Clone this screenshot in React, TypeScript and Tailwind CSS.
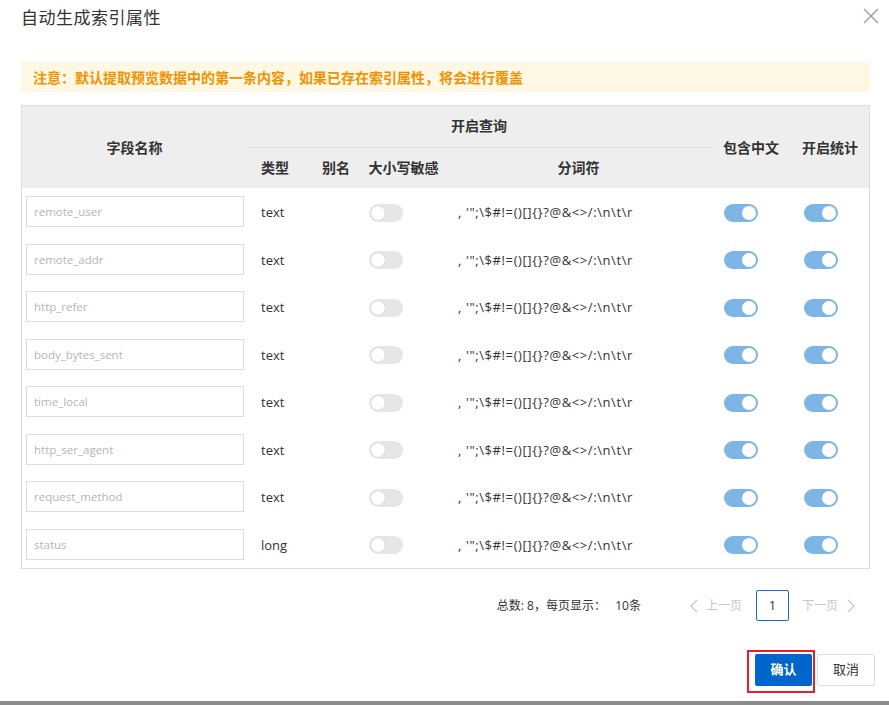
import React from 'react'

const font = { fontFamily: '"Open Sans", "Noto Sans CJK SC", sans-serif' }

const SEP = `, '";\\$#!=()[]{}?@&<>/:\\n\\t\\r`

const rows = [
	{ name: 'remote_user', type: 'text' },
	{ name: 'remote_addr', type: 'text' },
	{ name: 'http_refer', type: 'text' },
	{ name: 'body_bytes_sent', type: 'text' },
	{ name: 'time_local', type: 'text' },
	{ name: 'http_ser_agent', type: 'text' },
	{ name: 'request_method', type: 'text' },
	{ name: 'status', type: 'long' },
]

function Toggle({ on }: { on?: boolean }) {
	return (
		<div
			className={`relative w-[34px] h-[18px] rounded-full ${
				on ? 'bg-[#7db5e5]' : 'bg-[#e6e6e6]'
			}`}
		>
			<div
				className={`absolute top-[2px] w-[14px] h-[14px] rounded-full bg-white ${
					on ? 'right-[2px]' : 'left-[2px] shadow-[0_0_1px_rgba(0,0,0,0.25)]'
				}`}
			/>
		</div>
	)
}

export default function App() {
	return (
		<div className="w-[889px] h-[705px] bg-white flex flex-col text-[#333]" style={font}>
			<div className="flex items-center justify-between h-[36px] pl-[21px] pr-[9px]">
				<h1 className="text-[17px] leading-[24px] text-[#333] tracking-[0.5px]">自动生成索引属性</h1>
				<svg width="18" height="18" viewBox="0 0 18 18" className="-mt-[5px]">
					<path d="M2 2 L16 16 M16 2 L2 16" stroke="#9a9a9a" strokeWidth="1.3" />
				</svg>
			</div>

			<div className="mt-[26px] ml-[21px] mr-[19px] h-[30px] bg-[#fdf7e3] flex items-center pl-[12px] text-[14px] font-bold text-[#f39200]">
				注意：默认提取预览数据中的第一条内容，如果已存在索引属性，将会进行覆盖
			</div>

			<div className="mt-[13px] ml-[21px] mr-[19px] border border-[#dddddd]">
				<table className="w-full border-collapse text-[13px] table-fixed">
					<colgroup>
						<col className="w-[225px]" />
						<col className="w-[64px]" />
						<col className="w-[50px]" />
						<col className="w-[85px]" />
						<col className="w-[265px]" />
						<col className="w-[80px]" />
						<col />
					</colgroup>
					<thead className="bg-[#eeeeee] font-bold text-[#333] text-[14px]">
						<tr className="h-[41px]">
							<th rowSpan={2} className="font-bold">字段名称</th>
							<th colSpan={4} className="font-bold border-b border-[#dddddd] pb-[2px]">
								开启查询
							</th>
							<th rowSpan={2} className="font-bold">包含中文</th>
							<th rowSpan={2} className="font-bold">开启统计</th>
						</tr>
						<tr className="h-[41px]">
							<th className="font-bold pr-[8px]">类型</th>
							<th className="font-bold">别名</th>
							<th className="font-bold">大小写敏感</th>
							<th className="font-bold">分词符</th>
						</tr>
					</thead>
					<tbody>
						{rows.map((r) => (
							<tr key={r.name} className="h-[47.5px]">
								<td className="pl-[4px] pr-[3px]">
									<div className="h-[31px] border border-[#dddddd] flex items-center pl-[7px] text-[11.5px] text-[#b5b5b5]">
										{r.name}
									</div>
								</td>
								<td className="pl-[14px] pt-[2px]">{r.type}</td>
								<td />
								<td className="pl-[8px] pt-[2px]">
									<Toggle />
								</td>
								<td className="pl-[12px] pt-[2px] whitespace-nowrap tracking-[0.6px]">{SEP}</td>
								<td className="pl-[13px] pt-[2px]">
									<Toggle on />
								</td>
								<td className="pl-[13px] pt-[2px]">
									<Toggle on />
								</td>
							</tr>
						))}
					</tbody>
				</table>
			</div>

			<div className="mt-[21px] flex items-center justify-end pr-[33px] text-[12px]">
				<span className="text-[#333]">总数: 8，每页显示：&nbsp;&nbsp;&nbsp;10条</span>
				<span className="ml-[48px] flex items-center gap-[7px] text-[#c8c8c8]">
					<svg width="10" height="14" viewBox="0 0 10 14">
						<path d="M8 1 L2 7 L8 13" fill="none" stroke="#c8c8c8" strokeWidth="1.3" />
					</svg>
					上一页
				</span>
				<span className="ml-[14px] w-[33px] h-[31px] border border-[#1a6fcb] rounded-[2px] flex items-center justify-center text-[13px] text-[#333]">
					1
				</span>
				<span className="ml-[13px] flex items-center gap-[8px] text-[#c8c8c8]">
					下一页
					<svg width="10" height="14" viewBox="0 0 10 14">
						<path d="M2 1 L8 7 L2 13" fill="none" stroke="#c8c8c8" strokeWidth="1.3" />
					</svg>
				</span>
			</div>

			<div className="mt-[33px] flex justify-end pr-[14px] gap-[5px]">
				<div className="relative">
					<button className="w-[57px] h-[32px] bg-[#0066cc] text-white text-[13px] font-bold rounded-[2px]">
						确认
					</button>
					<div className="absolute -left-[8px] -right-[3px] -top-[4px] -bottom-[7px] border-2 border-[#e8202a] pointer-events-none" />
				</div>
				<button className="w-[58px] h-[32px] bg-white border border-[#dddddd] text-[#333] text-[13px] rounded-[2px]">
					取消
				</button>
			</div>

			<div className="flex-1" />
			<div className="h-[4px] bg-[#8c8c8c]" />
		</div>
	)
}
